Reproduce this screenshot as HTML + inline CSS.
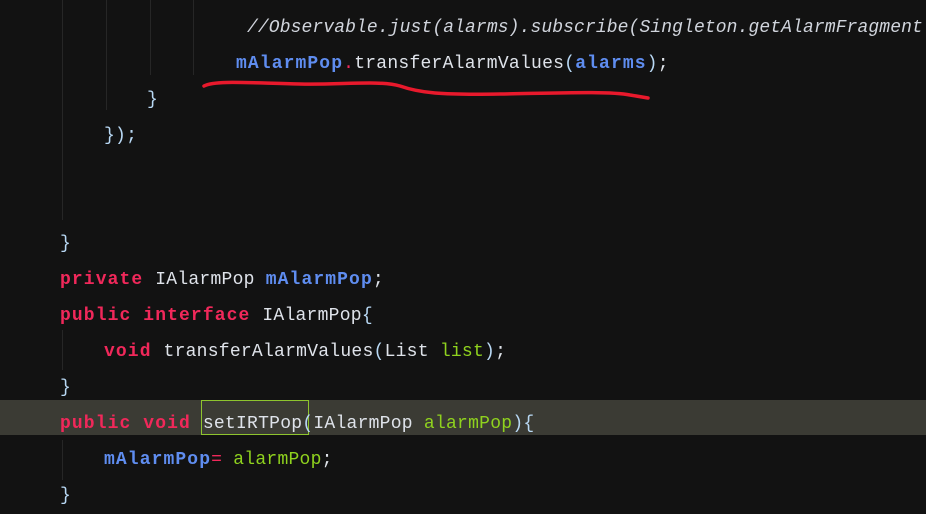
<!DOCTYPE html>
<html><head><style>
body{margin:0;width:926px;height:511px;background:#121212;overflow:hidden;position:relative;font-family:"Liberation Mono",monospace;font-size:18px;color:#dfe3ea;letter-spacing:0.25px}
.l{position:absolute;left:0;height:36px;line-height:36px;white-space:pre}
.k{color:#f0285a;font-weight:bold;letter-spacing:1.1px}
.f{color:#5f8df0;font-weight:bold;letter-spacing:1.1px}
.p{color:#8fd21e}
.c{font-style:italic;color:#d0d4dc;letter-spacing:0.1px}
.b{color:#b8d8f4}
.g{position:absolute;width:1px;background:#262626}
</style></head><body>
<div class="g" style="left:62px;top:0;height:220px"></div>
<div class="g" style="left:106px;top:0;height:110px"></div>
<div class="g" style="left:150px;top:0;height:75px"></div>
<div class="g" style="left:193px;top:0;height:75px"></div>
<div class="g" style="left:62px;top:330px;height:40px"></div>
<div class="g" style="left:62px;top:440px;height:40px"></div>
<div style="position:absolute;left:0;top:400px;width:926px;height:35px;background:#3b3b34"></div>
<div style="position:absolute;left:201px;top:400px;width:106px;height:33px;border:1px solid #8ec42e"></div>
<div class="l c" style="top:10px;left:247px">//Observable.just(alarms).subscribe(Singleton.getAlarmFragment</div>
<div class="l" style="top:46px;left:236px"><span class="f">mAlarmPop</span><span style="color:#f0285a">.</span>transferAlarmValues<span class="b">(</span><span class="f">alarms</span><span class="b">)</span>;</div>
<div class="l b" style="top:82px;left:147px">}</div>
<div class="l b" style="top:118px;left:104px">});</div>
<div class="l b" style="top:226px;left:60px">}</div>
<div class="l" style="top:262px;left:60px"><span class="k">private </span>IAlarmPop <span class="f">mAlarmPop</span>;</div>
<div class="l" style="top:298px;left:60px"><span class="k">public interface </span>IAlarmPop<span class="b">{</span></div>
<div class="l" style="top:334px;left:104px"><span class="k">void </span>transferAlarmValues<span class="b">(</span>List <span class="p">list</span><span class="b">)</span>;</div>
<div class="l b" style="top:370px;left:60px">}</div>
<div class="l" style="top:406px;left:60px"><span class="k">public void </span>setIRTPop<span class="b">(</span>IAlarmPop <span class="p">alarmPop</span><span class="b">){</span></div>
<div class="l" style="top:442px;left:104px"><span class="f">mAlarmPop</span><span style="color:#f0285a">=</span> <span class="p">alarmPop</span>;</div>
<div class="l b" style="top:478px;left:60px">}</div>
<svg style="position:absolute;left:0;top:0" width="926" height="511"><path d="M204 86 C215 80,250 83,300 84 C340 85,380 80,400 86 C420 93,440 95,500 94 C560 93,610 91,630 95 L648 98" fill="none" stroke="#e8192c" stroke-width="3.5" stroke-linecap="round"/></svg>
</body></html>
